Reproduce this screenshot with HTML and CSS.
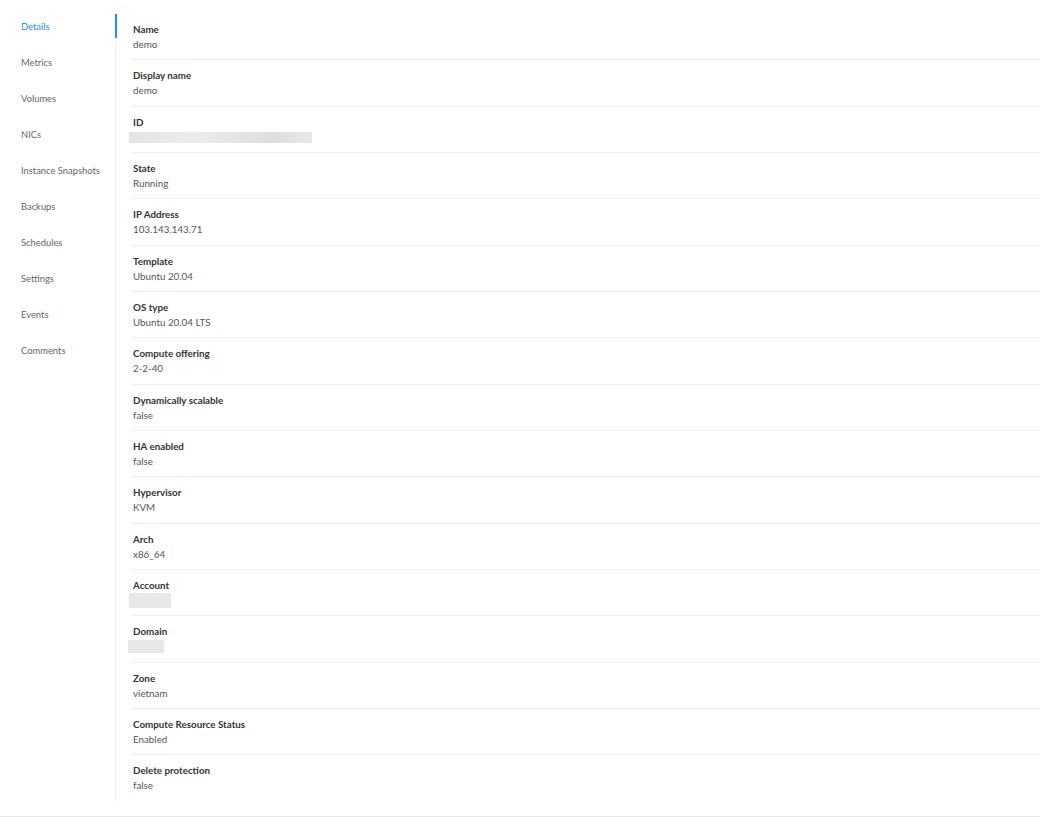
FILE: index.html
```html
<!DOCTYPE html>
<html lang="en">
<head>
    <meta charset="UTF-8">
    <title>Instance details</title>
    <link rel="stylesheet" href="styles.css">
</head>
<body>
    <div class="tabs">
        <!-- Left tab navigation -->
        <ul class="tab-nav">
            <li class="tab active">Details</li>
            <li class="tab">Metrics</li>
            <li class="tab">Volumes</li>
            <li class="tab">NICs</li>
            <li class="tab">Instance Snapshots</li>
            <li class="tab">Backups</li>
            <li class="tab">Schedules</li>
            <li class="tab">Settings</li>
            <li class="tab">Events</li>
            <li class="tab">Comments</li>
        </ul>

        <!-- Details list -->
        <div class="details">
            <div class="item"><div class="label">Name</div><div class="value">demo</div></div>
            <div class="item"><div class="label">Display name</div><div class="value">demo</div></div>
            <div class="item"><div class="label">ID</div><div class="value"><span class="blur blur-id"></span></div></div>
            <div class="item"><div class="label">State</div><div class="value">Running</div></div>
            <div class="item"><div class="label">IP Address</div><div class="value">103.143.143.71</div></div>
            <div class="item"><div class="label">Template</div><div class="value">Ubuntu 20.04</div></div>
            <div class="item"><div class="label">OS type</div><div class="value">Ubuntu 20.04 LTS</div></div>
            <div class="item"><div class="label">Compute offering</div><div class="value">2-2-40</div></div>
            <div class="item"><div class="label">Dynamically scalable</div><div class="value">false</div></div>
            <div class="item"><div class="label">HA enabled</div><div class="value">false</div></div>
            <div class="item"><div class="label">Hypervisor</div><div class="value">KVM</div></div>
            <div class="item"><div class="label">Arch</div><div class="value">x86_64</div></div>
            <div class="item"><div class="label">Account</div><div class="value"><span class="blur blur-account"></span></div></div>
            <div class="item"><div class="label">Domain</div><div class="value"><span class="blur blur-domain"></span></div></div>
            <div class="item"><div class="label">Zone</div><div class="value">vietnam</div></div>
            <div class="item"><div class="label">Compute Resource Status</div><div class="value">Enabled</div></div>
            <div class="item"><div class="label">Delete protection</div><div class="value">false</div></div>
        </div>
    </div>

    <div class="page-end"></div>
</body>
</html>
```

FILE: styles.css
```css
/* Base */
body {
    margin: 0;
    font-family: 'Lato', 'Noto Sans', sans-serif;
    font-size: 9.8px;
    color: #555;
    background: #fff;
}

/* Tabs layout */
.tabs {
    display: flex;
    align-items: stretch;
    padding-top: 14px;
}

.tab-nav {
    list-style: none;
    margin: 0;
    padding: 0;
    width: 115px;
    flex-shrink: 0;
    border-right: 1px solid #eeeeee;
    display: flex;
    flex-direction: column;
    gap: 12px;
}

.tab {
    position: relative;
    height: 24px;
    line-height: 26px;
    padding-left: 21px;
    font-size: 9.4px;
    color: #666;
    white-space: nowrap;
}

.tab.active {
    color: #1890ff;
}

/* Ink bar over the nav border */
.tab.active::after {
    content: '';
    position: absolute;
    top: 0;
    right: -2px;
    width: 2px;
    height: 100%;
    background: #1890ff;
}

/* Details list */
.details {
    flex: 1;
    padding-left: 16px;
}

.item {
    padding: 8px 0 7.33px 1px;
    border-bottom: 1px solid #eeeeee;
}

.item:last-child {
    border-bottom: none;
}

.label {
    line-height: 15px;
    font-weight: 700;
    color: #333;
}

.value {
    line-height: 15px;
    height: 15px;
    display: flex;
    align-items: center;
}

/* Masked values */
.blur {
    display: block;
    margin-left: -4px;
    background: #e8e8e8;
}

.blur-id {
    width: 183px;
    height: 11px;
    background: linear-gradient(90deg, #e4e4e4, #ececec 35%, #dedede 80%, #e9e9e9);
}

.blur-account {
    width: 42px;
    height: 15px;
}

.blur-domain {
    width: 36px;
    height: 13px;
    margin-left: -5px;
}

.page-end {
    margin-top: 15px;
    border-top: 1px solid #e8e8e8;
}
```
